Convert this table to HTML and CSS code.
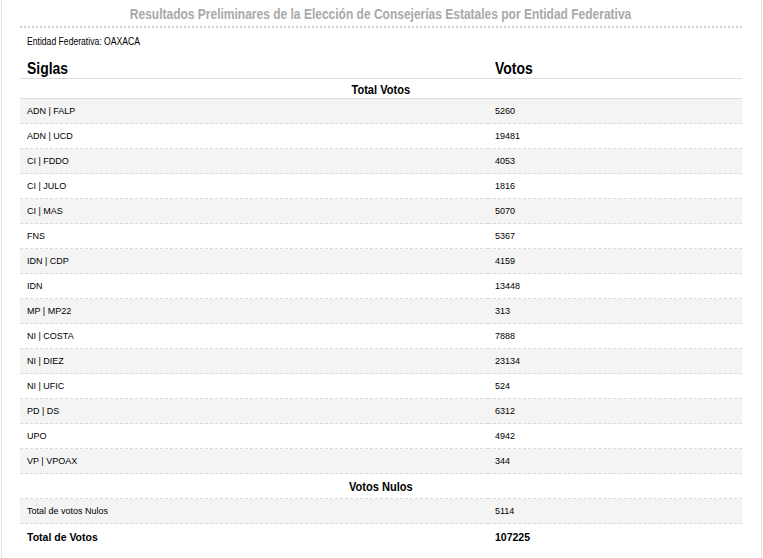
FILE: index.html
```html
<!DOCTYPE html>
<html lang="es">
<head>
<meta charset="utf-8">
<title>Resultados Preliminares</title>
<link rel="stylesheet" href="styles.css">
</head>
<body>
<div class="page">
  <h1 class="title"><span class="narrow title-text">Resultados Preliminares de la Elección de Consejerías Estatales por Entidad Federativa</span></h1>
  <p class="entidad"><span class="narrow left">Entidad Federativa: OAXACA</span></p>
  <table class="results">
    <thead>
      <tr class="head-row">
        <th class="col-siglas"><span class="narrow left">Siglas</span></th>
        <th class="col-votos"><span class="narrow left">Votos</span></th>
      </tr>
      <tr class="section-row first-section">
        <th colspan="2"><span class="narrow">Total Votos</span></th>
      </tr>
    </thead>
    <tbody>
      <tr class="row alt"><td>ADN | FALP</td><td>5260</td></tr>
      <tr class="row"><td>ADN | UCD</td><td>19481</td></tr>
      <tr class="row alt"><td>CI | FDDO</td><td>4053</td></tr>
      <tr class="row"><td>CI | JULO</td><td>1816</td></tr>
      <tr class="row alt"><td>CI | MAS</td><td>5070</td></tr>
      <tr class="row"><td>FNS</td><td>5367</td></tr>
      <tr class="row alt"><td>IDN | CDP</td><td>4159</td></tr>
      <tr class="row"><td>IDN</td><td>13448</td></tr>
      <tr class="row alt"><td>MP | MP22</td><td>313</td></tr>
      <tr class="row"><td>NI | COSTA</td><td>7888</td></tr>
      <tr class="row alt"><td>NI | DIEZ</td><td>23134</td></tr>
      <tr class="row"><td>NI | UFIC</td><td>524</td></tr>
      <tr class="row alt"><td>PD | DS</td><td>6312</td></tr>
      <tr class="row"><td>UPO</td><td>4942</td></tr>
      <tr class="row alt"><td>VP | VPOAX</td><td>344</td></tr>
      <tr class="section-row"><th colspan="2"><span class="narrow">Votos Nulos</span></th></tr>
      <tr class="row alt"><td>Total de votos Nulos</td><td>5114</td></tr>
      <tr class="total-row"><td>Total de Votos</td><td>107225</td></tr>
    </tbody>
  </table>
</div>
</body>
</html>
```

FILE: styles.css
```css
html, body {
  margin: 0;
  padding: 0;
  background: #ffffff;
}

body {
  font-family: "Liberation Sans", Arial, sans-serif;
  color: #000;
}

.page {
  margin: 0 1px;
  min-height: 558px;
  box-sizing: border-box;
  border-left: 1px solid #e3e3e3;
  border-right: 1px solid #e3e3e3;
  padding: 0 19px 0 18px;
}

.narrow {
  display: inline-block;
  white-space: nowrap;
  transform: scaleX(0.82);
  transform-origin: center;
}

.narrow.left {
  transform-origin: left center;
}

.narrow.title-text {
  transform: scaleX(0.857);
}

.title {
  margin: 0;
  padding: 6px 0 4px;
  font-size: 14px;
  line-height: 16px;
  font-weight: bold;
  color: #a9a9a9;
  text-align: center;
  border-bottom: 2px dotted #cfcfcf;
}

.entidad {
  margin: 7px 0 0;
  padding-left: 7px;
  font-size: 10.5px;
  line-height: 12px;
}

.results {
  width: 722px;
  margin-top: 13px;
  border-collapse: collapse;
  table-layout: fixed;
}

.col-siglas {
  width: 454px;
}

.head-row th {
  text-align: left;
  font-size: 17px;
  line-height: 18px;
  font-weight: bold;
  padding: 0 7px;
  border-bottom: 1px solid #dcdcdc;
}

.section-row th {
  text-align: center;
  font-size: 13.5px;
  line-height: 16px;
  font-weight: bold;
  padding: 5px 7px 3px;
  border-bottom: 1px dashed #dadada;
}

.section-row.first-section th {
  padding: 3px 7px 0;
  border-bottom: 1px solid #dcdcdc;
}

.row td {
  font-size: 9px;
  line-height: 12px;
  padding: 6px 7px 6px;
  border-bottom: 1px dashed #dadada;
}

.row.alt td {
  background: #f4f4f4;
}

.total-row td {
  font-size: 10.5px;
  line-height: 12px;
  font-weight: bold;
  padding: 7px 7px 6px;
}
```
